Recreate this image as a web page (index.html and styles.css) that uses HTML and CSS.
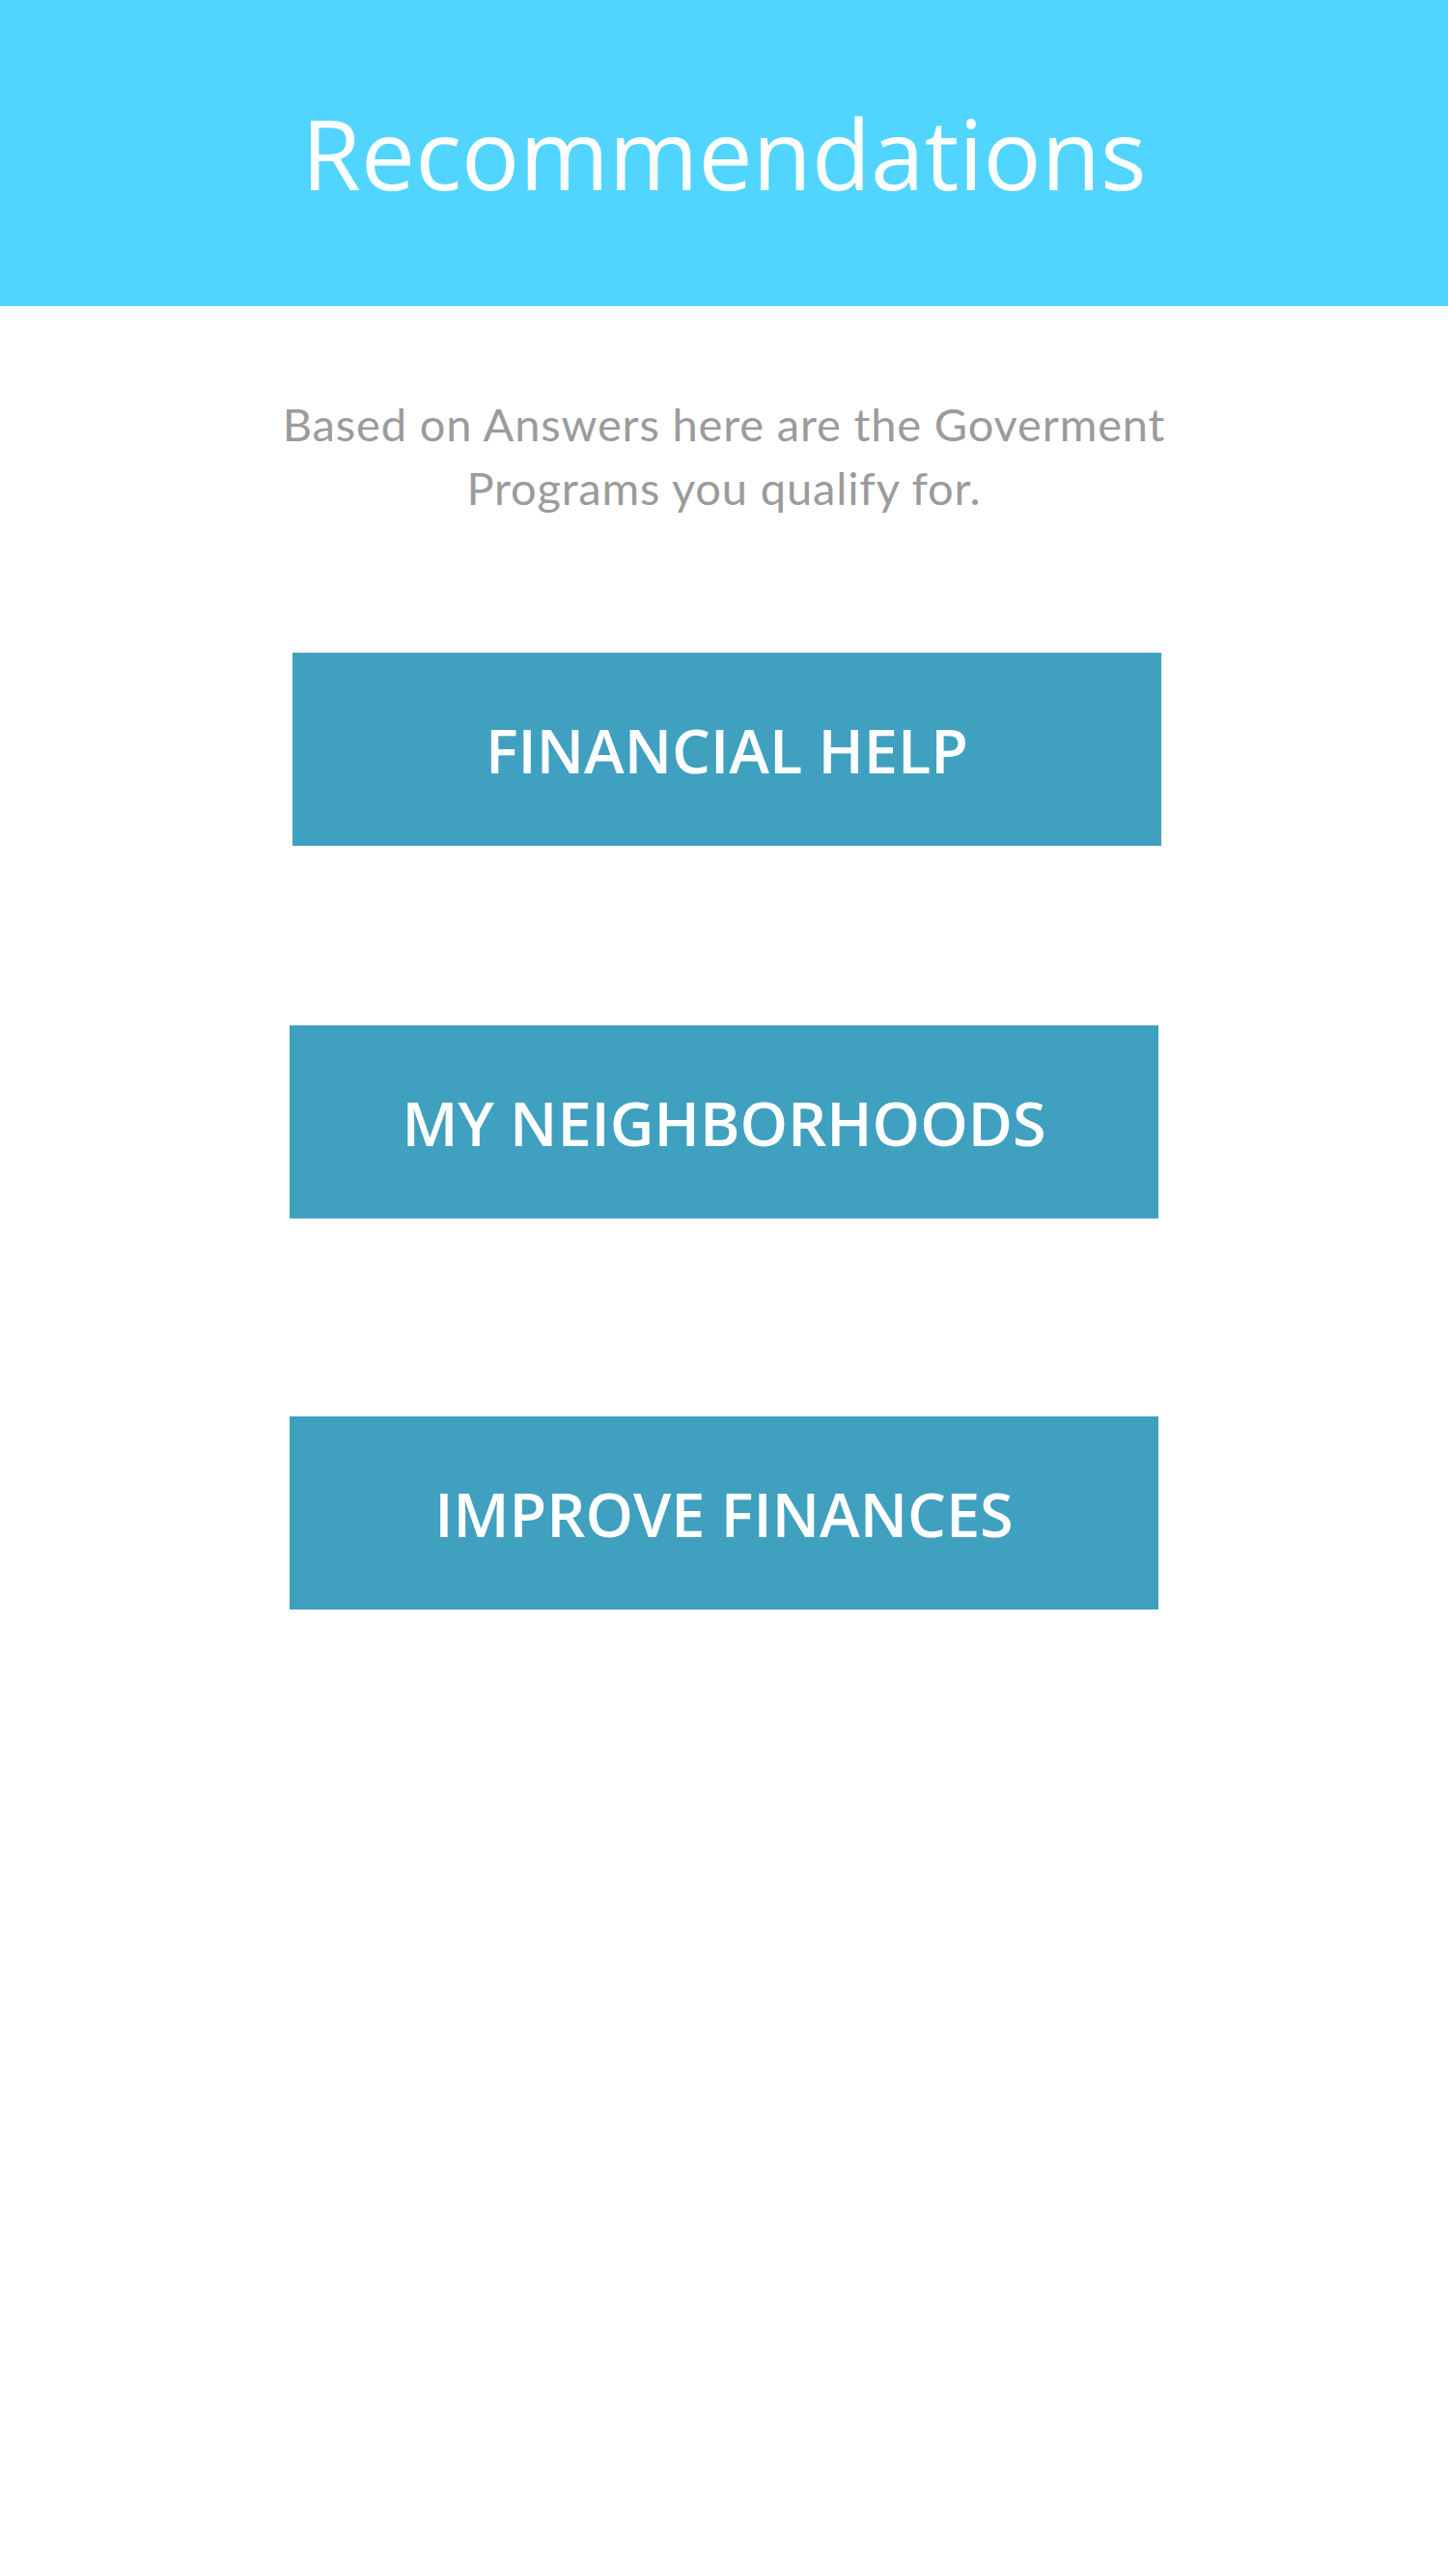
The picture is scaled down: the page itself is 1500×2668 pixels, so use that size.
FILE: index.html
```html
<!DOCTYPE html>
<html lang="en">
<head>
<meta charset="utf-8">
<title>Recommendations</title>
<link rel="stylesheet" href="styles.css">
</head>
<body>
<header class="topbar">
  <h1 class="title">Recommendations</h1>
</header>
<main class="content">
  <p class="intro">Based on Answers here are the Goverment<br>Programs you qualify for.</p>
  <div class="actions">
    <a class="btn btn-first" href="#">FINANCIAL HELP</a>
    <a class="btn btn-second" href="#">MY NEIGHBORHOODS</a>
    <a class="btn btn-third" href="#">IMPROVE FINANCES</a>
  </div>
</main>
</body>
</html>
```

FILE: styles.css
```css
html, body {
  margin: 0;
  padding: 0;
  background: #ffffff;
}
body {
  min-height: 2668px;
  font-family: "Open Sans", "Liberation Sans", sans-serif;
}
.topbar {
  background: #51d5ff;
  height: 317px;
  padding-top: 108px;
  box-sizing: border-box;
}
.title {
  margin: 0;
  text-align: center;
  color: #ffffff;
  font-family: "Open Sans", sans-serif;
  font-weight: 400;
  font-size: 100px;
  line-height: 100px;
}
.content {
  display: flex;
  flex-direction: column;
  align-items: center;
}
.intro {
  margin: 89px 0 0;
  text-align: center;
  color: #9b9b9b;
  font-family: "Lato", sans-serif;
  font-size: 47px;
  line-height: 66px;
  letter-spacing: 0.85px;
}
.actions {
  width: 900px;
  display: flex;
  flex-direction: column;
  margin-top: 138px;
}
.btn {
  display: flex;
  align-items: center;
  justify-content: center;
  height: 200px;
  width: 900px;
  background: #3fa0bf;
  color: #ffffff;
  text-decoration: none;
  font-family: "Open Sans", sans-serif;
  font-weight: 600;
  font-size: 63px;
}
.btn-first {
  margin-left: 3px;
}
.btn-second {
  margin-top: 186px;
}
.btn-third {
  margin-top: 205px;
}
```
